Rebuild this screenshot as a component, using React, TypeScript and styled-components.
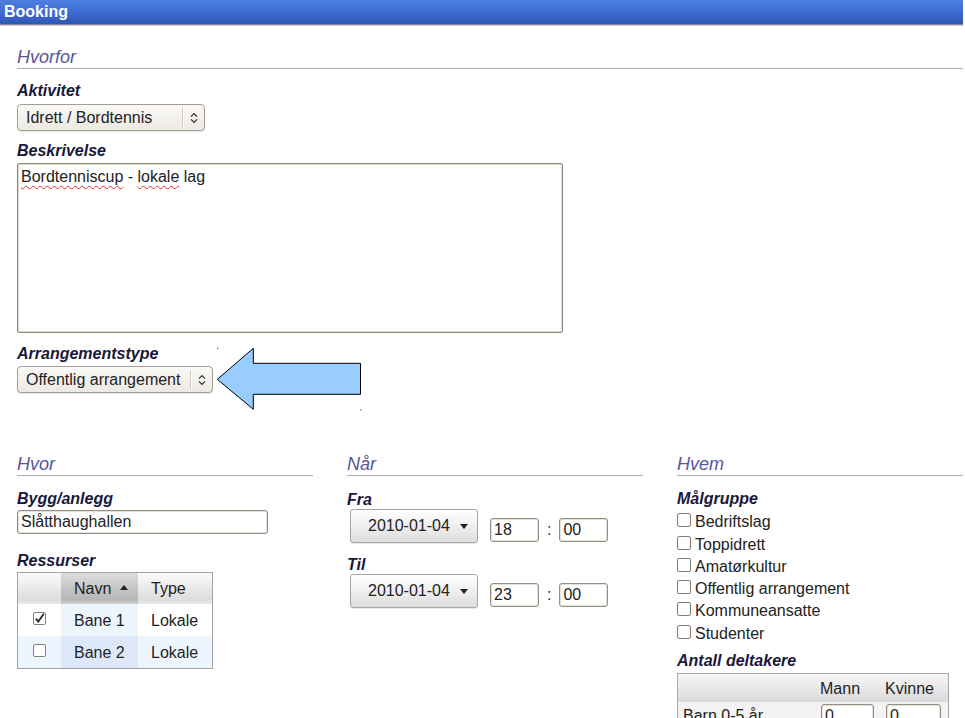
import React from "react";
import styled, { createGlobalStyle } from "styled-components";

const Global = createGlobalStyle`
  html, body { margin: 0; padding: 0; background: #fff; }
  body {
    font-family: "Liberation Sans", Arial, Helvetica, sans-serif;
    font-size: 16px;
    color: #1a1a1a;
  }
`;

const Page = styled.div`
  position: relative;
  width: 963px;
  height: 718px;
  overflow: hidden;
`;

const TitleBar = styled.div`
  height: 24px;
  line-height: 24px;
  padding-left: 4px;
  background: linear-gradient(#4c7fdf, #3e6dd2 50%, #2f56b5);
  border-bottom: 1px solid #7d89a6;
  box-shadow: 0 1px 0 #cfcfcf;
  color: #fff;
  font-weight: bold;
  font-size: 16px;
`;

const Content = styled.div`
  padding-left: 17px;
`;

const SectionHeading = styled.div<{ $mt: number }>`
  margin-top: ${(p) => p.$mt}px;
  font-size: 18px;
  font-style: italic;
  line-height: 22px;
  color: #56569c;
  border-bottom: 1px solid #ababab;
`;

const FieldLabel = styled.div<{ $mt: number }>`
  margin-top: ${(p) => p.$mt}px;
  font-weight: bold;
  font-style: italic;
  line-height: 18px;
  color: #18183a;
`;

const SelectBox = styled.div<{ $w: number; $mt: number }>`
  margin-top: ${(p) => p.$mt}px;
  width: ${(p) => p.$w}px;
  height: 27px;
  box-sizing: border-box;
  display: flex;
  align-items: center;
  border: 1px solid #a59d91;
  border-radius: 4px;
  background: linear-gradient(#fbfaf8, #ece9e4);
  box-shadow: 0 1px 1px rgba(0, 0, 0, 0.1);
`;

const SelectText = styled.span`
  flex: 1;
  padding-left: 8px;
  white-space: nowrap;
  color: #222;
`;

const SelectHandle = styled.span`
  width: 21px;
  height: 19px;
  border-left: 1px solid #cdc6bb;
  box-shadow: inset 1px 0 0 #fff;
  display: flex;
  align-items: center;
  justify-content: center;
`;

const TextArea = styled.div`
  margin-top: 3px;
  width: 546px;
  height: 170px;
  box-sizing: border-box;
  border: 1px solid #8f877b;
  border-radius: 2px;
  box-shadow: inset 0 0 0 1px #dcd7cf;
  padding: 4px 3px;
  line-height: 18px;
  color: #222;
`;

const Misspelled = styled.span`
  text-decoration: underline wavy #e5302b;
  text-decoration-thickness: 1px;
  text-underline-offset: 3px;
  text-decoration-skip-ink: none;
`;

const Columns = styled.div`
  display: grid;
  grid-template-columns: 296px 296px 286px;
  column-gap: 34px;
  margin-top: 60px;
`;

const Column = styled.div`
  display: flex;
  flex-direction: column;
  align-items: flex-start;
`;

const FullWidth = styled.div`
  align-self: stretch;
`;

const TextInput = styled.input<{ $w: number; $mt?: number }>`
  margin: ${(p) => p.$mt ?? 0}px 0 0 0;
  width: ${(p) => p.$w}px;
  height: 24px;
  box-sizing: border-box;
  border: 1px solid #958d81;
  border-radius: 3px;
  box-shadow: inset 0 0 0 1px #e4e0da;
  padding: 0 0 0 3px;
  font-family: "Liberation Sans", Arial, sans-serif;
  font-size: 16px;
  color: #222;
  background: #fff;
  outline: none;
`;

const ResTable = styled.table`
  margin-top: 2px;
  border: 1px solid #a3a3a3;
  border-spacing: 0;
  width: 196px;
  table-layout: fixed;
`;

const HeadCell = styled.th<{ $sorted?: boolean }>`
  height: 31px;
  padding: 0 0 0 13px;
  text-align: left;
  font-weight: normal;
  color: #1e1e1e;
  white-space: nowrap;
  background: ${(p) =>
    p.$sorted
      ? "linear-gradient(#dcdcdc, #b6b6b6 85%, #d2d2d2)"
      : "linear-gradient(#fbfbfb, #dddddd 85%, #e9e9e9)"};
`;

const BodyCell = styled.td<{ $bg: string }>`
  height: 32px;
  padding: 2px 0 0 13px;
  box-sizing: border-box;
  background: ${(p) => p.$bg};
  color: #1e1e1e;
  white-space: nowrap;
`;

const CheckCell = styled.td<{ $bg: string }>`
  height: 32px;
  padding: 0;
  background: ${(p) => p.$bg};
`;

const CheckCenter = styled.div`
  display: flex;
  justify-content: center;
  align-items: center;
  height: 32px;
  padding-bottom: 3px;
  box-sizing: border-box;
`;

const SortArrow = styled.span`
  display: inline-block;
  margin-left: 9px;
  vertical-align: middle;
  border-left: 4.5px solid transparent;
  border-right: 4.5px solid transparent;
  border-bottom: 5px solid #222;
  margin-bottom: 3px;
`;

const Box = styled.span<{ $mb?: number; $size: number }>`
  display: inline-flex;
  flex-shrink: 0;
  width: ${(p) => p.$size}px;
  height: ${(p) => p.$size}px;
  box-sizing: border-box;
  border: 1px solid #867e72;
  border-radius: 2px;
  background: #fff;
  align-items: center;
  justify-content: center;
  overflow: visible;
  margin-bottom: ${(p) => p.$mb ?? 0}px;
`;

const TimeRow = styled.div<{ $mt: number }>`
  margin-top: ${(p) => p.$mt}px;
  display: flex;
  align-items: flex-end;
  padding-left: 3px;
`;

const DateButton = styled.div`
  width: 128px;
  height: 34px;
  box-sizing: border-box;
  border: 1px solid #a7a7a7;
  border-radius: 3px;
  background: linear-gradient(#ffffff, #efefef 50%, #dedede);
  box-shadow: 0 1px 1px rgba(0, 0, 0, 0.1);
  display: flex;
  align-items: center;
  padding-left: 17px;
  margin-right: 12px;
  color: #222;
`;

const Caret = styled.span`
  margin-left: 10px;
  width: 0;
  height: 0;
  border-left: 4.5px solid transparent;
  border-right: 4.5px solid transparent;
  border-top: 5px solid #222;
`;

const TimeInput = styled(TextInput)`
  margin-bottom: 1px;
`;

const Colon = styled.span`
  margin: 0 8px 4px 8px;
  line-height: 18px;
  color: #333;
`;

const CheckList = styled.div`
  margin-top: 1px;
  display: flex;
  flex-direction: column;
`;

const CheckItem = styled.div`
  display: flex;
  align-items: flex-end;
  height: 22.3px;
  line-height: 18px;
  color: #222;
  white-space: nowrap;
`;

const CheckLabelText = styled.span`
  margin-left: 4px;
`;

const CountTable = styled.table`
  margin-top: 3px;
  border: 1px solid #a8a8a8;
  border-spacing: 0;
  width: 272px;
  table-layout: fixed;
`;

const CountHead = styled.th`
  height: 24px;
  padding: 0 0 4px 3px;
  vertical-align: bottom;
  text-align: left;
  font-weight: normal;
  line-height: 18px;
  color: #1e1e1e;
  background: linear-gradient(#f6f6f6, #dadada);
`;

const CountCell = styled.td<{ $pl: number }>`
  padding: 2px 0 0 ${(p) => p.$pl}px;
  vertical-align: top;
  background: #f3f3f3;
  color: #1e1e1e;
  white-space: nowrap;
  line-height: 24px;
`;

const Arrow = styled.svg`
  position: absolute;
  left: 216px;
  top: 347px;
`;

function UpDown() {
  return (
    <svg width="8" height="12" viewBox="0 0 8 12">
      <path d="M1 4.6 L4 1.6 L7 4.6" fill="none" stroke="#333" strokeWidth="1.3" />
      <path d="M1 7.4 L4 10.4 L7 7.4" fill="none" stroke="#333" strokeWidth="1.3" />
    </svg>
  );
}

function CheckBox({ checked, mb, size = 13 }: { checked?: boolean; mb?: number; size?: number }) {
  return (
    <Box $mb={mb} $size={size}>
      {checked && (
        <svg width="11" height="11" viewBox="0 0 11 11" style={{ overflow: "visible" }}>
          <path d="M1.8 5.6 L4.3 8.6 L9.8 0.8" fill="none" stroke="#222" strokeWidth="1.7" />
        </svg>
      )}
    </Box>
  );
}

const targets = [
  "Bedriftslag",
  "Toppidrett",
  "Amatørkultur",
  "Offentlig arrangement",
  "Kommuneansatte",
  "Studenter",
];

export default function App() {
  return (
    <>
      <Global />
      <Page>
        <TitleBar>Booking</TitleBar>
        <Content>
          <SectionHeading $mt={21}>Hvorfor</SectionHeading>
          <FieldLabel $mt={13}>Aktivitet</FieldLabel>
          <SelectBox $w={188} $mt={4}>
            <SelectText>Idrett / Bordtennis</SelectText>
            <SelectHandle>
              <UpDown />
            </SelectHandle>
          </SelectBox>
          <FieldLabel $mt={11}>Beskrivelse</FieldLabel>
          <TextArea>
            <Misspelled>Bordtenniscup</Misspelled> - <Misspelled>lokale</Misspelled> lag
          </TextArea>
          <FieldLabel $mt={12}>Arrangementstype</FieldLabel>
          <SelectBox $w={196} $mt={3}>
            <SelectText>Offentlig arrangement</SelectText>
            <SelectHandle>
              <UpDown />
            </SelectHandle>
          </SelectBox>

          <Columns>
            <Column>
              <FullWidth>
                <SectionHeading $mt={0}>Hvor</SectionHeading>
              </FullWidth>
              <FieldLabel $mt={14}>Bygg/anlegg</FieldLabel>
              <TextInput $w={251} $mt={2} readOnly value="Slåtthaughallen" />
              <FieldLabel $mt={18}>Ressurser</FieldLabel>
              <ResTable>
                <colgroup>
                  <col style={{ width: 43 }} />
                  <col style={{ width: 77 }} />
                  <col style={{ width: 74 }} />
                </colgroup>
                <thead>
                  <tr>
                    <HeadCell />
                    <HeadCell $sorted>
                      Navn
                      <SortArrow />
                    </HeadCell>
                    <HeadCell>Type</HeadCell>
                  </tr>
                </thead>
                <tbody>
                  <tr>
                    <CheckCell $bg="#ffffff">
                      <CheckCenter>
                        <CheckBox checked />
                      </CheckCenter>
                    </CheckCell>
                    <BodyCell $bg="#edf5ff">Bane 1</BodyCell>
                    <BodyCell $bg="#ffffff">Lokale</BodyCell>
                  </tr>
                  <tr>
                    <CheckCell $bg="#edf5ff">
                      <CheckCenter>
                        <CheckBox />
                      </CheckCenter>
                    </CheckCell>
                    <BodyCell $bg="#dde9fb">Bane 2</BodyCell>
                    <BodyCell $bg="#edf5ff">Lokale</BodyCell>
                  </tr>
                </tbody>
              </ResTable>
            </Column>

            <Column>
              <FullWidth>
                <SectionHeading $mt={0}>Når</SectionHeading>
              </FullWidth>
              <FieldLabel $mt={15}>Fra</FieldLabel>
              <TimeRow $mt={0}>
                <DateButton>
                  2010-01-04
                  <Caret />
                </DateButton>
                <TimeInput $w={49} readOnly value="18" />
                <Colon>:</Colon>
                <TimeInput $w={49} readOnly value="00" />
              </TimeRow>
              <FieldLabel $mt={13}>Til</FieldLabel>
              <TimeRow $mt={0}>
                <DateButton>
                  2010-01-04
                  <Caret />
                </DateButton>
                <TimeInput $w={49} readOnly value="23" />
                <Colon>:</Colon>
                <TimeInput $w={49} readOnly value="00" />
              </TimeRow>
            </Column>

            <Column>
              <FullWidth>
                <SectionHeading $mt={0}>Hvem</SectionHeading>
              </FullWidth>
              <FieldLabel $mt={14}>Målgruppe</FieldLabel>
              <CheckList>
                {targets.map((t) => (
                  <CheckItem key={t}>
                    <CheckBox mb={4} size={14} />
                    <CheckLabelText>{t}</CheckLabelText>
                  </CheckItem>
                ))}
              </CheckList>
              <FieldLabel $mt={9}>Antall deltakere</FieldLabel>
              <CountTable>
                <colgroup>
                  <col style={{ width: 139 }} />
                  <col style={{ width: 65 }} />
                  <col style={{ width: 66 }} />
                </colgroup>
                <thead>
                  <tr>
                    <CountHead />
                    <CountHead>Mann</CountHead>
                    <CountHead>Kvinne</CountHead>
                  </tr>
                </thead>
                <tbody>
                  <tr>
                    <CountCell $pl={5}>Barn 0-5 år</CountCell>
                    <CountCell $pl={4}>
                      <TextInput $w={53} readOnly value="0" />
                    </CountCell>
                    <CountCell $pl={4}>
                      <TextInput $w={55} readOnly value="0" />
                    </CountCell>
                  </tr>
                </tbody>
              </CountTable>
            </Column>
          </Columns>
        </Content>

        <Arrow width="148" height="65" viewBox="0 0 148 65">
          <polygon
            points="1.3,32.3 37.3,1.3 37.3,16.3 144.5,16.3 144.5,47.3 37.3,47.3 37.3,62.3"
            fill="#99ccff"
            stroke="#000"
            strokeWidth="1"
          />
          <rect x="1.2" y="0.8" width="1" height="1" fill="#000" />
          <rect x="144.5" y="62.5" width="1" height="1" fill="#000" />
        </Arrow>
      </Page>
    </>
  );
}
